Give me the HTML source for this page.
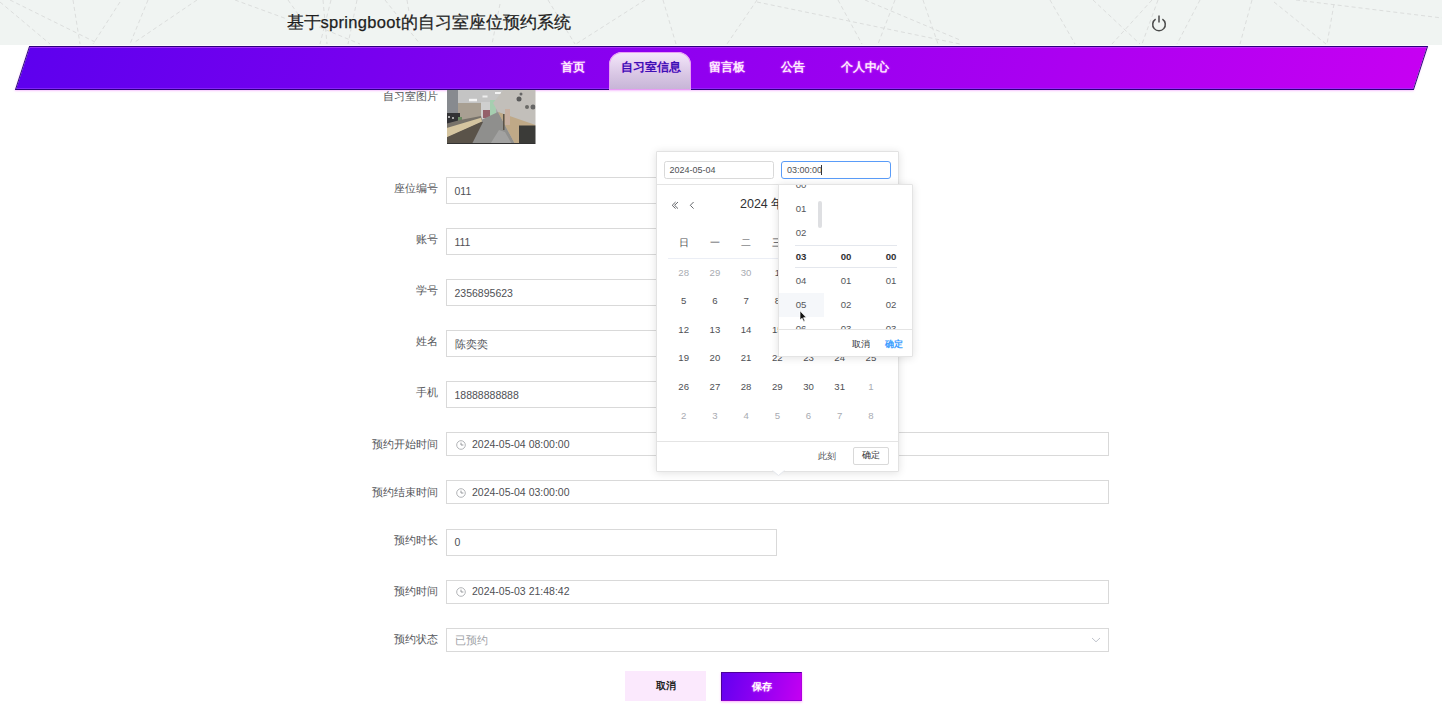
<!DOCTYPE html>
<html><head><meta charset="utf-8">
<style>
*{box-sizing:border-box;margin:0;padding:0}
html,body{width:1442px;height:720px;overflow:hidden;background:#fff;font-family:"Liberation Sans",sans-serif;color:#606266}
.abs{position:absolute}
#hdr{position:absolute;left:0;top:0;width:1442px;height:44.5px;background:#f0f4f2}
#title{position:absolute;left:286.5px;top:10.8px;font-size:16.5px;line-height:22px;color:#1e1e1e;white-space:nowrap;-webkit-text-stroke:0.25px #1e1e1e}
#nav{position:absolute;left:21.7px;top:45.5px;width:1399px;height:44px;transform:skewX(-18deg);background:linear-gradient(90deg,#5e00ee 0%,#c600f2 100%);border:1px solid #2c007c;box-shadow:inset 0 1px 0 rgba(200,80,255,.55),inset 0 -1px 0 rgba(150,60,255,.6),0 1px 2px rgba(240,150,255,.55)}
.ni{position:absolute;top:60px;font-size:12px;line-height:14px;font-weight:bold;color:#fbeaff;white-space:nowrap;text-shadow:0 0 2px rgba(255,120,255,.8)}
#tab{position:absolute;left:609px;top:52px;width:82px;height:38px;border-radius:13px 13px 0 0;background:linear-gradient(180deg,#f5e8fb 0%,#d8c6e4 60%,#c6b4d6 100%);box-shadow:0 0 0 1px #e89cf4 inset}
.lbl{position:absolute;right:1004px;font-size:10.5px;line-height:14px;color:#55575b;white-space:nowrap;text-align:right}
.inp{position:absolute;left:446px;border:1px solid #d9d9d9;background:#fff}
.txt{position:absolute;font-size:10.5px;line-height:14px;color:#4e5054;white-space:nowrap}
.dc{position:absolute;width:30px;text-align:center;font-size:9.6px;line-height:14px;color:#4e5054}
.ts{position:absolute;width:45px;text-align:center;font-size:9.6px;line-height:14px;color:#55575b}
</style></head><body>
<div id="hdr"><svg width="1442" height="45" style="position:absolute;left:0;top:0"><g stroke="#dcdedd" stroke-width="1" stroke-dasharray="4 3" fill="none"><line x1="0" y1="2" x2="50" y2="44"/><line x1="10" y1="0" x2="95" y2="42"/><line x1="73" y1="0" x2="80" y2="44"/><line x1="120" y1="2" x2="93" y2="44"/><line x1="148" y1="0" x2="130" y2="44"/><line x1="197" y1="0" x2="135" y2="42"/><line x1="235" y1="0" x2="287" y2="19"/><line x1="288" y1="0" x2="298" y2="14"/><line x1="323" y1="0" x2="327" y2="44"/><line x1="331" y1="0" x2="320" y2="44"/><line x1="357" y1="0" x2="348" y2="44"/><line x1="319" y1="27" x2="360" y2="44"/><line x1="385" y1="0" x2="420" y2="44"/><line x1="407" y1="0" x2="409" y2="12"/><line x1="500" y1="4" x2="492" y2="44"/><line x1="548" y1="0" x2="575" y2="44"/><line x1="645" y1="0" x2="576" y2="44"/><line x1="663" y1="0" x2="676" y2="44"/><line x1="757" y1="0" x2="727" y2="44"/><line x1="757" y1="2" x2="960" y2="44"/><line x1="838" y1="0" x2="862" y2="44"/><line x1="865" y1="0" x2="960" y2="40"/><line x1="895" y1="0" x2="878" y2="44"/><line x1="923" y1="0" x2="938" y2="44"/><line x1="1050" y1="0" x2="1075" y2="44"/><line x1="1093" y1="0" x2="1140" y2="44"/><line x1="1152" y1="0" x2="1112" y2="44"/><line x1="1158" y1="0" x2="1142" y2="44"/><line x1="1200" y1="0" x2="1177" y2="44"/><line x1="1252" y1="0" x2="1240" y2="44"/><line x1="1274" y1="2" x2="1326" y2="44"/><line x1="1296" y1="0" x2="1442" y2="18"/><line x1="1334" y1="4" x2="1327" y2="44"/></g></svg>
<svg width="18" height="18" viewBox="0 0 18 18" style="position:absolute;left:1150px;top:13.5px"><path d="M5.6 5.2 A6.3 6.3 0 1 0 12.4 5.2" stroke="#4a4a4a" stroke-width="1.5" fill="none"/><line x1="9" y1="1.5" x2="9" y2="8.5" stroke="#4a4a4a" stroke-width="1.5"/></svg></div>
<div id="title">基于<span style="letter-spacing:0.3px">springboot</span>的自习室座位预约系统</div>
<div id="nav"></div>
<div id="tab"></div>
<div class="ni" style="left:561px">首页</div>
<div class="ni" style="left:621px;color:#3c10b4;text-shadow:0 0 1.5px rgba(255,140,255,.7)">自习室信息</div>
<div class="ni" style="left:709px">留言板</div>
<div class="ni" style="left:781px">公告</div>
<div class="ni" style="left:841px">个人中心</div>

<!-- form -->
<svg class="abs" style="left:447px;top:89.5px" width="88.5" height="54" viewBox="0 0 88.5 54">
<defs><filter id="bl" x="-5%" y="-5%" width="110%" height="110%"><feGaussianBlur stdDeviation="0.6"/></filter><clipPath id="cp"><rect width="88.5" height="54"/></clipPath></defs>
<g clip-path="url(#cp)"><g filter="url(#bl)">
<rect x="-2" y="-2" width="92" height="58" fill="#a9a9aa"/>
<rect x="8" y="-2" width="52" height="17" fill="#c4c4c4"/>
<polygon points="-2,-2 11,0 11,26 -2,28" fill="#878a8f"/>
<rect x="11" y="13" width="24" height="17" fill="#a89f92"/>
<rect x="34" y="12" width="11" height="18" fill="#cfcfcf"/>
<rect x="36" y="20" width="8" height="8" fill="#94606a"/>
<rect x="43" y="10" width="6" height="16" fill="#a6ceb0"/>
<rect x="22" y="8.8" width="8" height="2.5" fill="#f4f4f4"/>
<rect x="35.5" y="5.5" width="5" height="2" fill="#eeeeee"/>
<rect x="48" y="2" width="6" height="2" fill="#f2f2f2"/>
<polygon points="58,-2 90,-2 90,38 51,22 46,13" fill="#c2bfba"/>
<circle cx="72" cy="9" r="2.5" fill="#5a5a5a"/><circle cx="74" cy="4" r="1.5" fill="#666"/><circle cx="80" cy="17" r="2" fill="#6a6a66"/><circle cx="86" cy="17" r="2.5" fill="#666"/>
<rect x="-2" y="23" width="15" height="11" fill="#303036"/>
<circle cx="2" cy="27" r="1" fill="#ddd"/><circle cx="6" cy="28" r="1" fill="#ccc"/><rect x="11" y="27" width="4" height="5" fill="#6a8a62"/>
<polygon points="-2,34 13,30 34,26 35,30 -2,40" fill="#77726a"/><polygon points="34,30 51,22 69,56 24,56" fill="#8f8f8d"/>
<polygon points="42,56 52,40 58,42 66,56" fill="#a2a2a1"/>
<polygon points="-2,56 -2,47.5 34,31.5 36,32 24,56" fill="#5a5249"/>
<polygon points="-2,38.5 34,27.8 35,31.5 -2,48" fill="#d5c5a0"/>
<polygon points="51,22 90,35.5 90,56 69,56" fill="#bfa987"/>
<rect x="58" y="19" width="5" height="16" fill="#c8b0a0"/>
<rect x="56" y="24" width="1.5" height="16" fill="#5a5248"/>
<rect x="72" y="35.5" width="17" height="17.5" fill="#3b3b39"/>
<rect x="-2" y="53" width="92" height="3" fill="#333"/>
</g></g></svg>
<div class="lbl" style="top:88.5px">自习室图片</div>
<div class="lbl" style="top:181px">座位编号</div>
<div class="lbl" style="top:232px">账号</div>
<div class="lbl" style="top:283px">学号</div>
<div class="lbl" style="top:334px">姓名</div>
<div class="lbl" style="top:385px">手机</div>
<div class="lbl" style="top:437px">预约开始时间</div>
<div class="lbl" style="top:485px">预约结束时间</div>
<div class="lbl" style="top:533px">预约时长</div>
<div class="lbl" style="top:584px">预约时间</div>
<div class="lbl" style="top:632px">预约状态</div>

<div class="inp" style="top:177px;width:331px;height:27px"></div>
<div class="inp" style="top:228px;width:331px;height:27px"></div>
<div class="inp" style="top:279px;width:331px;height:27px"></div>
<div class="inp" style="top:330px;width:331px;height:27px"></div>
<div class="inp" style="top:381px;width:331px;height:27px"></div>
<div class="inp" style="top:432px;width:663px;height:24px"></div>
<div class="inp" style="top:480px;width:663px;height:24px"></div>
<div class="inp" style="top:528.5px;width:331px;height:27px"></div>
<div class="inp" style="top:579.5px;width:663px;height:24px"></div>
<div class="inp" style="top:627.5px;width:663px;height:24px"></div>

<div class="txt" style="left:454.5px;top:183.5px">011</div>
<div class="txt" style="left:454.5px;top:234.5px">111</div>
<div class="txt" style="left:454.5px;top:285.5px">2356895623</div>
<div class="txt" style="left:454.5px;top:336.5px">陈奕奕</div>
<div class="txt" style="left:454.5px;top:387.5px">18888888888</div>
<div class="txt" style="left:472px;top:437px">2024-05-04 08:00:00</div>
<div class="txt" style="left:472px;top:485px">2024-05-04 03:00:00</div>
<div class="txt" style="left:454.5px;top:535px">0</div>
<div class="txt" style="left:472px;top:584px">2024-05-03 21:48:42</div>
<div class="txt" style="left:455px;top:633px;color:#a0a3a8">已预约</div>

<svg class="abs" width="10" height="10" viewBox="0 0 10 10" style="left:455.5px;top:439.5px"><circle cx="5" cy="5" r="4.3" stroke="#a9abaf" stroke-width="0.9" fill="none"/><path d="M5 2.6 V5 H7.4" stroke="#8d8f93" stroke-width="0.9" fill="none"/></svg>
<svg class="abs" width="10" height="10" viewBox="0 0 10 10" style="left:455.5px;top:487.5px"><circle cx="5" cy="5" r="4.3" stroke="#a9abaf" stroke-width="0.9" fill="none"/><path d="M5 2.6 V5 H7.4" stroke="#8d8f93" stroke-width="0.9" fill="none"/></svg>
<svg class="abs" width="10" height="10" viewBox="0 0 10 10" style="left:455.5px;top:586.5px"><circle cx="5" cy="5" r="4.3" stroke="#a9abaf" stroke-width="0.9" fill="none"/><path d="M5 2.6 V5 H7.4" stroke="#8d8f93" stroke-width="0.9" fill="none"/></svg>
<svg class="abs" width="10" height="6" viewBox="0 0 10 6" style="left:1090.5px;top:637px"><path d="M1 1 L5 4.8 L9 1" stroke="#c0c4cc" stroke-width="1" fill="none"/></svg>
<div class="abs" style="left:625px;top:671.3px;width:81px;height:29.4px;background:#fbe9fd;font-size:10px;line-height:29.4px;text-align:center;color:#222;font-weight:bold">取消</div>
<div class="abs" style="left:721px;top:671.5px;width:81px;height:29.5px;background:linear-gradient(105deg,#6200f0 0%,#9200f2 50%,#c400f2 100%);border:1px solid #4c0098;border-right-color:#b000e0;border-bottom-color:#8a00d0;box-shadow:0 1px 2px rgba(255,110,255,.6);font-size:10px;line-height:27.5px;text-align:center;color:#fff;font-weight:bold;text-shadow:0 0 2px #ff80ff">保存</div>

<!-- date picker -->
<div id="dp" class="abs" style="left:656px;top:151px;width:242.5px;height:320.5px;background:#fff;border:1px solid #e2e2e2;border-radius:1px;box-shadow:0 1px 8px rgba(0,0,0,.12)"></div>
<svg class="abs" style="left:772px;top:470px" width="13" height="6" viewBox="0 0 13 6"><path d="M0 0 L6.5 5.5 L13 0 Z" fill="#fff"/><path d="M0.5 0.5 L6.5 5.5 L12.5 0.5" stroke="#e4e7ed" stroke-width="1" fill="none"/></svg>
<div class="abs" style="left:664px;top:161px;width:110px;height:17.5px;border:1px solid #d9d9d9;border-radius:2.5px;background:#fff"></div>
<div class="abs" style="left:669.5px;top:163px;font-size:9px;line-height:14px;color:#4e5054">2024-05-04</div>
<div class="abs" style="left:781px;top:161px;width:110px;height:17.5px;border:1px solid #5a9cf8;border-radius:3px;background:#fff"></div>
<div class="abs" style="left:787px;top:163px;font-size:9px;line-height:14px;color:#4e5054">03:00:00</div>
<div class="abs" style="left:821px;top:165px;width:0.8px;height:10px;background:#333"></div>
<div class="abs" style="left:657px;top:184px;width:241px;height:1px;background:#e4e4e4"></div>
<svg class="abs" style="left:670px;top:200px" width="10" height="10" viewBox="0 0 10 10"><path d="M5.6 2 L2.2 5.3 L5.6 8.6 M8 2 L4.6 5.3 L8 8.6" stroke="#55575b" stroke-width="0.9" fill="none"/></svg>
<svg class="abs" style="left:688px;top:200px" width="8" height="10" viewBox="0 0 8 10"><path d="M5.6 2 L2.3 5.3 L5.6 8.6" stroke="#55575b" stroke-width="0.9" fill="none"/></svg>
<div class="abs" style="left:740px;top:196px;font-size:12.5px;line-height:16px;color:#303133;white-space:nowrap">2024 年 5 月</div>
<div class="dc" style="left:668.7px;top:235.5px">日</div><div class="dc" style="left:699.9px;top:235.5px">一</div><div class="dc" style="left:731.1px;top:235.5px">二</div><div class="dc" style="left:762.3px;top:235.5px">三</div><div class="dc" style="left:793.5px;top:235.5px">四</div><div class="dc" style="left:824.7px;top:235.5px">五</div><div class="dc" style="left:855.9px;top:235.5px">六</div>
<div class="abs" style="left:667.5px;top:258px;width:219px;height:1px;background:#ebeef5"></div>
<div class="dc" style="left:668.7px;top:265.5px;color:#a8abb2">28</div><div class="dc" style="left:699.9px;top:265.5px;color:#a8abb2">29</div><div class="dc" style="left:731.1px;top:265.5px;color:#a8abb2">30</div><div class="dc" style="left:762.3px;top:265.5px;color:#4e5054">1</div><div class="dc" style="left:793.5px;top:265.5px;color:#4e5054">2</div><div class="dc" style="left:824.7px;top:265.5px;color:#4e5054">3</div><div class="dc" style="left:855.9px;top:265.5px;color:#4e5054">4</div><div class="dc" style="left:668.7px;top:294.2px;color:#4e5054">5</div><div class="dc" style="left:699.9px;top:294.2px;color:#4e5054">6</div><div class="dc" style="left:731.1px;top:294.2px;color:#4e5054">7</div><div class="dc" style="left:762.3px;top:294.2px;color:#4e5054">8</div><div class="dc" style="left:793.5px;top:294.2px;color:#4e5054">9</div><div class="dc" style="left:824.7px;top:294.2px;color:#4e5054">10</div><div class="dc" style="left:855.9px;top:294.2px;color:#4e5054">11</div><div class="dc" style="left:668.7px;top:322.7px;color:#4e5054">12</div><div class="dc" style="left:699.9px;top:322.7px;color:#4e5054">13</div><div class="dc" style="left:731.1px;top:322.7px;color:#4e5054">14</div><div class="dc" style="left:762.3px;top:322.7px;color:#4e5054">15</div><div class="dc" style="left:793.5px;top:322.7px;color:#4e5054">16</div><div class="dc" style="left:824.7px;top:322.7px;color:#4e5054">17</div><div class="dc" style="left:855.9px;top:322.7px;color:#4e5054">18</div><div class="dc" style="left:668.7px;top:351.3px;color:#4e5054">19</div><div class="dc" style="left:699.9px;top:351.3px;color:#4e5054">20</div><div class="dc" style="left:731.1px;top:351.3px;color:#4e5054">21</div><div class="dc" style="left:762.3px;top:351.3px;color:#4e5054">22</div><div class="dc" style="left:793.5px;top:351.3px;color:#4e5054">23</div><div class="dc" style="left:824.7px;top:351.3px;color:#4e5054">24</div><div class="dc" style="left:855.9px;top:351.3px;color:#4e5054">25</div><div class="dc" style="left:668.7px;top:379.9px;color:#4e5054">26</div><div class="dc" style="left:699.9px;top:379.9px;color:#4e5054">27</div><div class="dc" style="left:731.1px;top:379.9px;color:#4e5054">28</div><div class="dc" style="left:762.3px;top:379.9px;color:#4e5054">29</div><div class="dc" style="left:793.5px;top:379.9px;color:#4e5054">30</div><div class="dc" style="left:824.7px;top:379.9px;color:#4e5054">31</div><div class="dc" style="left:855.9px;top:379.9px;color:#a8abb2">1</div><div class="dc" style="left:668.7px;top:408.5px;color:#a8abb2">2</div><div class="dc" style="left:699.9px;top:408.5px;color:#a8abb2">3</div><div class="dc" style="left:731.1px;top:408.5px;color:#a8abb2">4</div><div class="dc" style="left:762.3px;top:408.5px;color:#a8abb2">5</div><div class="dc" style="left:793.5px;top:408.5px;color:#a8abb2">6</div><div class="dc" style="left:824.7px;top:408.5px;color:#a8abb2">7</div><div class="dc" style="left:855.9px;top:408.5px;color:#a8abb2">8</div>
<div class="abs" style="left:657px;top:441px;width:241px;height:1px;background:#e4e4e4"></div>
<div class="abs" style="left:818px;top:449px;font-size:9px;line-height:14px;color:#4e5054">此刻</div>
<div class="abs" style="left:853px;top:447px;width:35.5px;height:17.5px;border:1px solid #d9d9d9;border-radius:2px;background:#fff;font-size:9px;line-height:15.5px;text-align:center;color:#303133">确定</div>

<div id="tp" class="abs" style="left:777.5px;top:184px;width:135.5px;height:172.5px;background:#fff;border:1px solid #e4e4e4;border-radius:1px;box-shadow:0 1px 8px rgba(0,0,0,.12);overflow:hidden">
<div class="abs" style="left:0;top:108.2px;width:45px;height:23.5px;background:#f5f7fa"></div>
<div class="abs" style="left:16px;top:60.3px;width:102px;height:23px;border-top:1px solid #e4e7ed;border-bottom:1px solid #e4e7ed"></div>
<div class="ts" style="left:0px;top:-7.3px;">00</div><div class="ts" style="left:0px;top:16.7px;">01</div><div class="ts" style="left:0px;top:40.7px;">02</div><div class="ts" style="left:0px;top:64.7px;color:#303133;font-weight:bold">03</div><div class="ts" style="left:0px;top:88.7px;">04</div><div class="ts" style="left:0px;top:112.7px;">05</div><div class="ts" style="left:0px;top:136.7px;">06</div><div class="ts" style="left:45.0px;top:64.7px;color:#303133;font-weight:bold">00</div><div class="ts" style="left:45.0px;top:88.7px;">01</div><div class="ts" style="left:45.0px;top:112.7px;">02</div><div class="ts" style="left:45.0px;top:136.7px;">03</div><div class="ts" style="left:90.0px;top:64.7px;color:#303133;font-weight:bold">00</div><div class="ts" style="left:90.0px;top:88.7px;">01</div><div class="ts" style="left:90.0px;top:112.7px;">02</div><div class="ts" style="left:90.0px;top:136.7px;">03</div><div class="abs" style="left:0;top:143.5px;width:135px;height:28px;background:#fff;border-top:1px solid #e4e4e4"></div>
<div class="abs" style="left:39px;top:15.6px;width:4px;height:27.4px;border-radius:2px;background:#dedfe2"></div>
<div class="abs" style="left:73.5px;top:152px;font-size:9px;line-height:14px;color:#303133">取消</div>
<div class="abs" style="left:106px;top:152px;font-size:9px;line-height:14px;color:#409eff;font-weight:bold">确定</div>
</div>
<svg class="abs" style="left:798.6px;top:310.2px" width="8" height="12" viewBox="0 0 8 12"><path d="M1 0.8 L1 10 L3.1 8.2 L4.7 11.6 L6 11 L4.5 7.7 L7.3 7.6 Z" fill="#111" stroke="#fff" stroke-width="0.7"/></svg>
</body></html>
